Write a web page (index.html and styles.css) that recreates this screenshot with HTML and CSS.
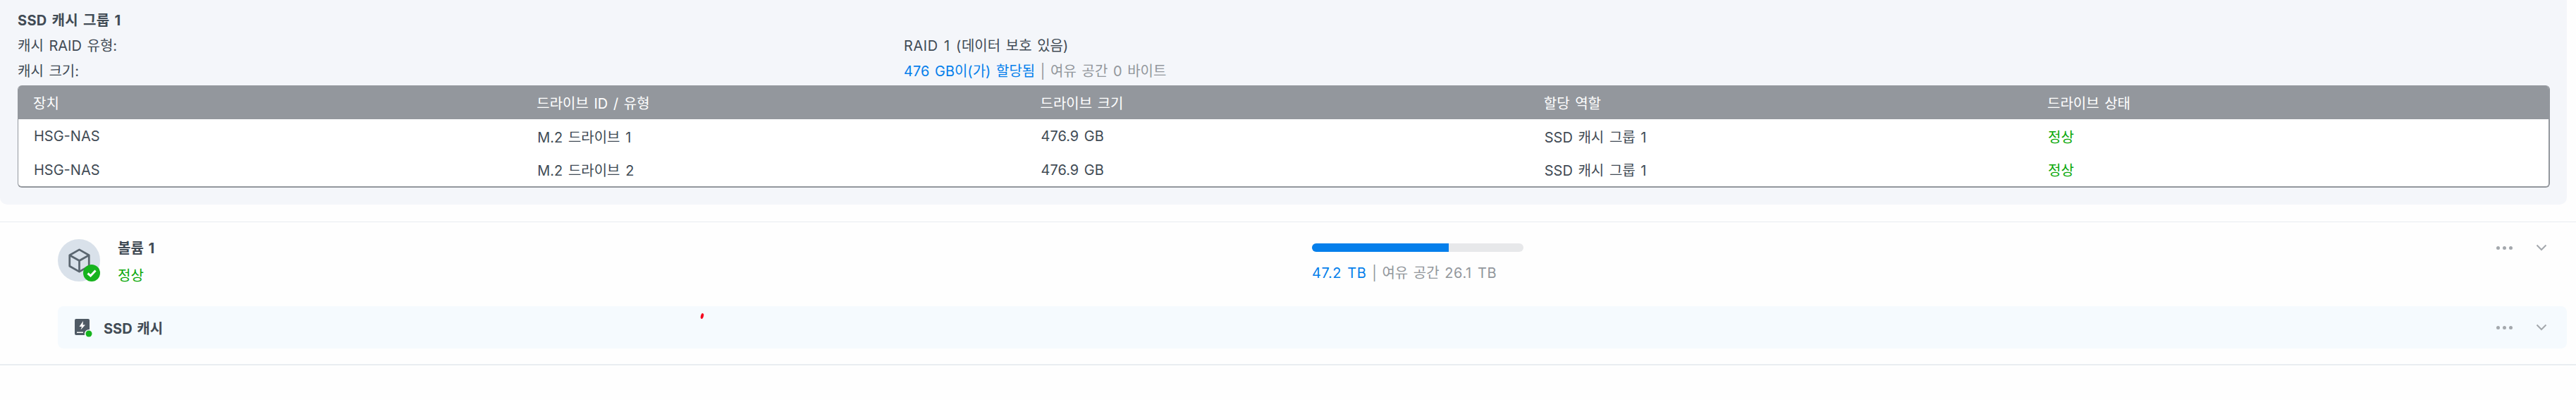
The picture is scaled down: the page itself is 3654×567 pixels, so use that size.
FILE: index.html
```html
<!DOCTYPE html>
<html>
<head>
    <title>SSD 캐시</title>
    <meta charset="UTF-8">
    <link rel="stylesheet" href="styles.css">
</head>
<body>
    <div class="cache-panel">
        <div class="cache-title">SSD 캐시 그룹 1</div>
        <div class="info-row">
            <div class="info-label">캐시 RAID 유형:</div>
            <div><span class="num">RAID 1 (</span>데이터 보호 있음)</div>
        </div>
        <div class="info-row">
            <div class="info-label">캐시 크기:</div>
            <div><span class="used">476 GB이(가) 할당됨</span> <span class="free">| 여유 공간 0 바이트</span></div>
        </div>
        <div class="drive-table">
            <div class="table-row table-head">
                <div>장치</div>
                <div>드라이브 ID / 유형</div>
                <div>드라이브 크기</div>
                <div>할당 역할</div>
                <div>드라이브 상태</div>
            </div>
            <div class="table-row">
                <div>HSG-NAS</div>
                <div>M.2 드라이브 1</div>
                <div>476.9 GB</div>
                <div>SSD 캐시 그룹 1</div>
                <div class="ok">정상</div>
            </div>
            <div class="table-row">
                <div>HSG-NAS</div>
                <div>M.2 드라이브 2</div>
                <div>476.9 GB</div>
                <div>SSD 캐시 그룹 1</div>
                <div class="ok">정상</div>
            </div>
        </div>
    </div>

    <div class="volume-section">
        <div class="volume-row">
            <div class="volume-icon">
                <svg width="33" height="35" viewBox="0 0 36 38" fill="none" stroke="#5b6670" stroke-width="3" stroke-linejoin="round">
                    <path d="M18 2 L33 10.5 V27.5 L18 36 L3 27.5 V10.5 Z"/>
                    <path d="M3 10.5 L18 19 L33 10.5 M18 19 V36"/>
                </svg>
                <svg class="volume-badge" width="24" height="24" viewBox="0 0 24 24">
                    <circle cx="12" cy="12" r="12" fill="#16b31e"/>
                    <path d="M6.5 12.5 L10.5 16 L17.5 8.5" fill="none" stroke="#fff" stroke-width="3"/>
                </svg>
            </div>
            <div class="volume-name">
                <div class="volume-title">볼륨 1</div>
                <div class="ok">정상</div>
            </div>
            <div class="volume-usage">
                <div class="usage-bar"><div class="usage-fill" style="width: 64.5%"></div></div>
                <div class="usage-text"><span class="used num">47.2 TB</span> <span class="free">| 여유 공간 <span class="num">26.1 TB</span></span></div>
            </div>
            <div class="row-actions">
                <div class="dots"><i></i><i></i><i></i></div>
                <svg width="16" height="10" viewBox="0 0 16 10" fill="none" stroke="#a4a8ad" stroke-width="2"><path d="M1.5 1.5 L8 8 L14.5 1.5"/></svg>
            </div>
        </div>
        <div class="cache-row">
            <svg width="26" height="27" viewBox="0 0 26 27">
                <path d="M2 1 H19 Q21 1 21 3 V16 A6.5 6.5 0 0 0 14 24 H2 Q0 24 0 22 V3 Q0 1 2 1 Z" fill="#4f5a65"/>
                <path d="M12 4 L6.5 12 H10 L8.5 16.5 L15 9.5 H11.5 Z" fill="#fff"/>
                <path d="M3 19.5 H12 V21 H3 Z" fill="#fff"/>
                <circle cx="20" cy="22" r="4.5" fill="#16b31e"/>
            </svg>
            <div class="cache-name">SSD 캐시</div>
            <div class="row-actions">
                <div class="dots"><i></i><i></i><i></i></div>
                <svg width="16" height="10" viewBox="0 0 16 10" fill="none" stroke="#a4a8ad" stroke-width="2"><path d="M1.5 1.5 L8 8 L14.5 1.5"/></svg>
            </div>
        </div>
        <div class="red-mark"></div>
    </div>
</body>
</html>
```

FILE: styles.css
```css
:root {
    --text-color: #414b55;
    --muted-color: #92979c;
    --blue-color: #057feb;
    --green-color: #0ba80b;
    --line-color: #e9edf1;
}

body {
    font-family: Inter, "Noto Sans CJK KR", sans-serif;
    font-size: 20px;
    word-spacing: 2px;
    margin: 0;
    background: #fefefe;
    color: var(--text-color);
    overflow: hidden;
}

.cache-panel {
    background: #f4f6fa;
    margin-right: 13px;
    padding: 11px 24px 24px 25px;
    border-radius: 0 0 10px 10px;
}

.cache-title {
    font-weight: 700;
    line-height: 36px;
    letter-spacing: 0.3px;
}

.info-row {
    display: flex;
    line-height: 36px;
}

.info-label {
    width: 1257px;
}

.used {
    color: var(--blue-color);
}

.free {
    color: var(--muted-color);
}

.ok {
    color: var(--green-color);
}

/* latin runs are a little wider in the original */
.num {
    letter-spacing: 0.6px;
}

.drive-table {
    margin-top: 2px;
    background: #fff;
    border-radius: 6px;
    border-bottom: 2px solid #93979d;
    border-left: 1px solid #93979d;
    border-right: 2px solid #93979d;
    overflow: hidden;
}

.table-row {
    display: grid;
    grid-template-columns: repeat(5, 714.25px);
    padding-left: 22px;
    height: 48px;
    align-items: center;
}

.table-row:last-child {
    height: 47px;
}

.table-head {
    background: #93979d;
    color: #fff;
    margin-left: -1px;
}

.volume-section {
    position: relative;
    margin-top: 24px;
    padding: 24px 13px 22px 82px;
    border-top: 1px solid var(--line-color);
    border-bottom: 2px solid var(--line-color);
}

.volume-row {
    display: flex;
    height: 60px;
    margin-bottom: 35px;
}

.volume-icon {
    position: relative;
    flex: none;
    width: 60px;
    height: 60px;
    border-radius: 50%;
    background: #d9e1ea;
    display: flex;
    justify-content: center;
    align-items: center;
}

.volume-badge {
    position: absolute;
    right: 0;
    bottom: 0;
}

.volume-name {
    width: 1694px;
    margin-left: 25px;
}

.volume-title {
    font-weight: 700;
    line-height: 26px;
    margin-bottom: 13px;
}

.volume-name .ok {
    line-height: 26px;
}

.volume-usage {
    width: 300px;
    padding-top: 6px;
}

.usage-bar {
    height: 12px;
    border-radius: 6px;
    background: #e7e8ea;
    overflow: hidden;
}

.usage-fill {
    height: 100%;
    background: var(--blue-color);
}

.usage-text {
    margin-top: 16px;
    line-height: 28px;
}

.row-actions {
    display: flex;
    align-items: center;
    height: 24px;
    gap: 33px;
    margin-left: auto;
    padding-right: 28px;
}

.dots {
    display: flex;
    gap: 4px;
}

.dots i {
    width: 5px;
    height: 5px;
    border-radius: 50%;
    background: #a4a8ad;
}

.cache-row {
    display: flex;
    align-items: center;
    height: 60px;
    padding-left: 24px;
    background: #f5fafe;
    border-radius: 8px;
}

.cache-name {
    font-weight: 700;
    margin-left: 15px;
}

.red-mark {
    position: absolute;
    left: 994px;
    top: 129px;
    width: 4px;
    height: 8px;
    border-radius: 50%;
    background: #f5001e;
    transform: rotate(15deg);
}
```
